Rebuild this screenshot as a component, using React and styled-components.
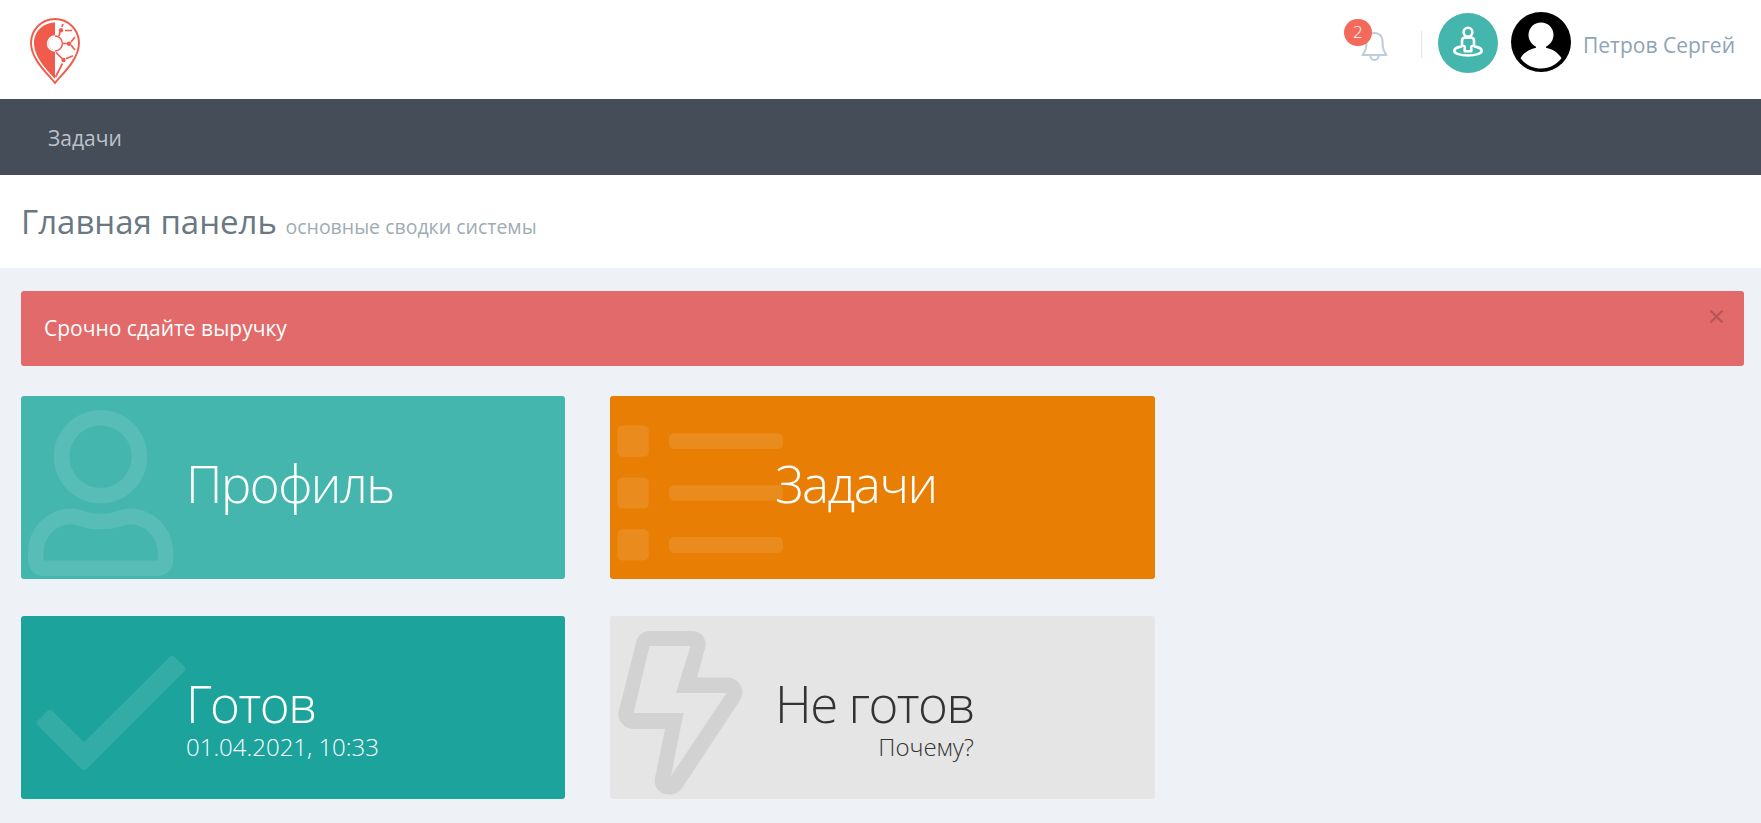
import React from "react"
import styled, { createGlobalStyle } from "styled-components"
import { FaRegUser } from "react-icons/fa"

const GlobalStyle = createGlobalStyle`
 * {
  box-sizing: border-box;
 }
 body {
  margin: 0;
  background: #eef2f7;
  font-family: "Open Sans", "Noto Sans", sans-serif;
  font-size: 21px;
  color: #333;
 }
`

const Page = styled.div`
 min-height: 823px;
 background: #eef2f7;
 overflow: hidden;
`

const Header = styled.header`
 display: flex;
 justify-content: space-between;
 height: 99px;
 padding: 12px 26px 0 29px;
 background: #fff;
`

const Logo = styled.svg`
 width: 52px;
 height: 68px;
 margin-top: 5px;
`

const TopMenu = styled.div`
 display: flex;
 align-items: flex-start;
`

const Notifications = styled.div`
 position: relative;
 width: 46px;
 height: 60px;
`

const Bell = styled.svg`
 position: absolute;
 left: 17px;
 top: 19px;
 width: 27px;
 height: 31px;
`

const Badge = styled.span`
 position: absolute;
 left: 0;
 top: 7px;
 width: 28px;
 height: 27px;
 border-radius: 14px;
 background: #f36a5a;
 color: #fff;
 font-size: 17px;
 font-weight: 300;
 line-height: 26px;
 text-align: center;
`

const Separator = styled.div`
 width: 1px;
 height: 27px;
 margin: 19px 16px 0 31px;
 background: #dfe4ea;
`

const Round = styled.svg`
 width: 60px;
 height: 60px;
 margin: ${props => props.$top}px 13px 0 0;
 border-radius: 50%;
 background: ${props => props.$color};
`

const Username = styled.span`
 margin: 19px 0 0 -1px;
 line-height: 28px;
 color: #8ea3b6;
 white-space: nowrap;
`

const Nav = styled.nav`
 display: flex;
 align-items: center;
 height: 76px;
 padding: 2px 48px 0;
 background: #444d58;
 color: #bcc2cb;
`

const PageHead = styled.div`
 display: flex;
 align-items: baseline;
 height: 93px;
 padding: 24px 21px 0;
 background: #fff;
`

const Title = styled.h1`
 margin: 0;
 font-size: 33px;
 font-weight: 400;
 line-height: 45px;
 color: #697882;
`

const Subtitle = styled.small`
 margin-left: 8.5px;
 font-size: 19.5px;
 color: #9eacb4;
`

const Content = styled.main`
 padding: 23px 17px 0 21px;
`

const Alert = styled.div`
 display: flex;
 justify-content: space-between;
 height: 75px;
 padding: 23px 20px 0 23px;
 border-radius: 3px;
 background: #e26a6a;
 color: #fff;
 line-height: 29px;
`

const Close = styled.svg`
 width: 15px;
 height: 15px;
 margin-top: -5px;
`

const Cards = styled.div`
 display: grid;
 grid-template-columns: 544px 545px;
 grid-auto-rows: 183px;
 gap: 37px 45px;
 margin-top: 30px;
`

const Card = styled.div`
 position: relative;
 display: flex;
 padding: 61px 0 0 165px;
 border-radius: 3px;
 background: ${props => props.$color};
 color: ${props => props.$text || "#fff"};
`

const Visual = styled.div`
 position: absolute;
 left: 7px;
 top: 14px;
 height: 166px;
 color: ${props => props.$color || "#fff"};
 opacity: 0.1;
 svg {
  display: block;
  height: 166px;
 }
`

const Details = styled.div`
 position: relative;
 display: flex;
 flex-direction: column;
 align-items: ${props => props.$align || "flex-start"};
`

const Number = styled.div`
 font-size: 51px;
 font-weight: 300;
 line-height: 53px;
 letter-spacing: -1.5px;
`

const Desc = styled.div`
 font-size: 24px;
 font-weight: 300;
 line-height: 33px;
`

const LogoIcon = () => (
    <Logo viewBox="0 0 52 68" fill="none" stroke="#f15b4c">
        <path d="M26 66C20 58 2 43 2 26a24 24 0 0 1 48 0c0 17-18 32-24 40z" strokeWidth="1.9" />
        <path d="M26 5.600C14 5.600 5 15 5 26c0 14 13 27 21 36z" fill="#f15b4c" stroke="none" />
        <circle cx="26" cy="26.500" r="7.400" fill="#fff" strokeWidth="1.500" />
        <path d="M26 19.100a7.400 7.400 0 0 0 0 14.800" stroke="#fff" strokeWidth="1.600" />
        <path d="M30 19l1.500-6M33 10l1-3M36 13.500h7M34 26.500h6M42 25l4-5M42 28l4 5M27 35.500l6 6M37 41.800l7-3M26.500 60L33.500 46.500" strokeWidth="1.700" />
        <g fill="#f15b4c" stroke="none">
            <circle cx="32" cy="13.300" r="2.200" />
            <circle cx="40" cy="26.700" r="2.200" />
            <circle cx="34.500" cy="43" r="2.200" />
        </g>
    </Logo>
)

const StreetIcon = () => (
    <Round $top={1} $color="#44b6ae" viewBox="0 0 60 60" fill="none" stroke="#fff" strokeWidth="2.600" strokeLinejoin="round" strokeLinecap="round">
        <circle cx="30" cy="19.200" r="4.400" />
        <path d="M26.500 24.600c-1.600.5-2.500 1.700-2.500 3v4.300l2.700 1.800v4.600h6.600v-4.600l2.700-1.800v-4.300c0-1.300-.9-2.500-2.500-3z" />
        <path d="M23 33.600c-4 .7-6.700 2.200-6.700 4.100 0 2.700 6 4.800 13.700 4.800s13.700-2.100 13.700-4.800c0-1.900-2.700-3.400-6.700-4.100" />
    </Round>
)

const Avatar = () => (
    <Round $top={0} $color="#000" viewBox="0 0 60 60" fill="#fff">
        <path d="M30 10.500c7 0 12.500 5.400 12.500 12.500 0 5-2.900 9.300-7.500 11.800v.9c7 1.500 12.500 5.300 15.500 10.500-5 6.500-12 10.300-20.500 10.300S14.500 52.700 9.500 46.200C12.500 41 18 37.200 25 35.700v-.9c-4.600-2.500-7.500-6.800-7.500-11.800 0-7.100 5.500-12.500 12.500-12.500z" />
    </Round>
)

const ListIcon = () => (
    <svg viewBox="0 0 512 512" fill="currentColor">
        {[48, 208, 368].map(y => (
            <g key={y}>
                <rect x="1" y={y} width="97" height="96" rx="16" />
                <rect x="160" y={y + 24} width="352" height="48" rx="16" />
            </g>
        ))}
    </svg>
)

const CheckIcon = () => (
    <svg viewBox="0 0 512 512" fill="currentColor">
        <path d="M435.848 83.466L172.804 346.510l-96.652-96.652c-4.686-4.686-12.284-4.686-16.971 0l-28.284 28.284c-4.686 4.686-4.686 12.284 0 16.971l133.421 133.421c4.686 4.686 12.284 4.686 16.971 0l299.813-299.813c4.686-4.686 4.686-12.284 0-16.971l-28.284-28.284c-4.686-4.686-12.284-4.686-16.970 0z" />
    </svg>
)

const BoltIcon = () => (
    <svg viewBox="0 0 126 166" fill="currentColor" fillRule="evenodd">
        <path d="M33.500 1H75c9 0 15.500 8 13 17l-8 29.500H110c12 0 19 12 13.500 22L65 158c-8 12-30 7-27-10l10-49H17C8 99 0 91.500 1.500 82L19 13C20.500 5 26 1 33.500 1zM32.500 16L16.500 83H66.500L54 146l55.500-83H59L73.500 16z" />
    </svg>
)

const App = () => {
    return (
        <Page>
            <GlobalStyle />
            <Header>
                <LogoIcon />
                <TopMenu>
                    <Notifications>
                        <Bell viewBox="0 0 27 31" fill="none" stroke="#c0cdd8" strokeWidth="2.100" strokeLinejoin="round">
                            <path d="M13.500 2C8 2 5.500 6 5.500 10.500 5.500 18 4 20.500 1.500 24h24c-2.500-3.500-4-6-4-13.500C21.500 6 19 2 13.500 2z" />
                            <path d="M9.300 24.500c.3 3 2 4.500 4.200 4.500s3.900-1.500 4.200-4.500" />
                        </Bell>
                        <Badge>2</Badge>
                    </Notifications>
                    <Separator />
                    <StreetIcon />
                    <Avatar />
                    <Username>Петров Сергей</Username>
                </TopMenu>
            </Header>
            <Nav>Задачи</Nav>
            <PageHead>
                <Title>Главная панель</Title>
                <Subtitle>основные сводки системы</Subtitle>
            </PageHead>
            <Content>
                <Alert>
                    Срочно сдайте выручку
                    <Close viewBox="0 0 15 15" stroke="#b65656" strokeWidth="2.200">
                        <path d="M1.500 1.500l12 12M13.500 1.500l-12 12" />
                    </Close>
                </Alert>
                <Cards>
                    <Card $color="#44b6ae">
                        <Visual><FaRegUser size={166} preserveAspectRatio="xMinYMid meet" /></Visual>
                        <Details><Number>Профиль</Number></Details>
                    </Card>
                    <Card $color="#e87e04">
                        <Visual><ListIcon /></Visual>
                        <Details><Number>Задачи</Number></Details>
                    </Card>
                    <Card $color="#1ba39c">
                        <Visual><CheckIcon /></Visual>
                        <Details>
                            <Number>Готов</Number>
                            <Desc>01.04.2021, 10:33</Desc>
                        </Details>
                    </Card>
                    <Card $color="#e5e5e5" $text="#333">
                        <Visual $color="#333"><BoltIcon /></Visual>
                        <Details $align="flex-end">
                            <Number>Не готов</Number>
                            <Desc>Почему?</Desc>
                        </Details>
                    </Card>
                </Cards>
            </Content>
        </Page>
    )
}

export default App
